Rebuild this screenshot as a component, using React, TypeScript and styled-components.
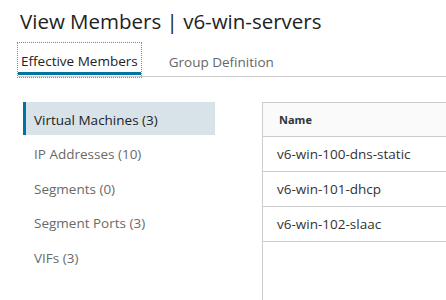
import * as React from "react"
import styled, { createGlobalStyle } from "styled-components"

const GlobalStyle = createGlobalStyle`
  html, body {
    margin: 0;
    padding: 0;
    background: #ffffff;
    font-family: "Open Sans", Lato, sans-serif;
    color: #333333;
  }
`

const Page = styled.div`
  width: 446px;
  height: 300px;
  overflow: hidden;
  display: flex;
  flex-direction: column;
`

const Title = styled.h2`
  margin: 0;
  padding: 8px 0 0 20px;
  height: 34px;
  box-sizing: border-box;
  font-size: 20.5px;
  font-weight: 400;
  line-height: 26px;
  color: #222222;
  white-space: nowrap;
`

const TabBar = styled.div`
  display: flex;
  align-items: flex-end;
  margin-left: 18px;
  margin-top: 8px;
  height: 34px;
  border-bottom: 1px solid #cccccc;
`

const Tab = styled.div<{ $active?: boolean }>`
  display: flex;
  align-items: center;
  height: 34px;
  box-sizing: border-box;
  padding: 3px 3px 0;
  margin-right: 25px;
  margin-bottom: -1px;
  font-size: 13.5px;
  color: ${(p) => (p.$active ? "#222222" : "#666666")};
  outline: ${(p) => (p.$active ? "1px dotted #888888" : "none")};
  box-shadow: ${(p) => (p.$active ? "inset 0 -3px 0 #0072a3" : "none")};
  border-bottom: ${(p) => (p.$active ? "2px solid transparent" : "none")};
`

const Body = styled.div`
  display: flex;
  padding-top: 25px;
  flex: 1;
`

const Nav = styled.div`
  width: 192px;
  margin-left: 23px;
  display: flex;
  flex-direction: column;
`

const NavItem = styled.div<{ $active?: boolean }>`
  height: 33px;
  margin-bottom: 1.5px;
  display: flex;
  align-items: center;
  padding: 2px 0 0 ${(p) => (p.$active ? "8px" : "11px")};
  box-sizing: border-box;
  border-left: ${(p) => (p.$active ? "3px solid #0072a3" : "none")};
  background: ${(p) => (p.$active ? "#d8e3e9" : "transparent")};
  font-size: 13.5px;
  color: ${(p) => (p.$active ? "#222222" : "#6a6a6a")};
  white-space: nowrap;
`

const Grid = styled.div`
  margin-left: 47px;
  flex: 1;
  border-top: 1px solid #cccccc;
  border-left: 1px solid #cccccc;
`

const HeaderRow = styled.div`
  height: 33px;
  display: flex;
  align-items: center;
  padding-left: 16px;
  background: #fafafa;
  border-bottom: 1px solid #cccccc;
  font-size: 11px;
  font-weight: 700;
  color: #333333;
`

const Row = styled.div`
  height: 34px;
  display: flex;
  align-items: center;
  padding-left: 14px;
  border-bottom: 1px solid #cccccc;
  font-size: 13.5px;
  color: #333333;
  white-space: nowrap;
`

const navItems = [
  "Virtual Machines (3)",
  "IP Addresses (10)",
  "Segments (0)",
  "Segment Ports (3)",
  "VIFs (3)",
]

const vms = ["v6-win-100-dns-static", "v6-win-101-dhcp", "v6-win-102-slaac"]

export default function App() {
  return (
    <Page>
      <GlobalStyle />
      <Title>View Members | v6-win-servers</Title>
      <TabBar>
        <Tab $active>Effective Members</Tab>
        <Tab>Group Definition</Tab>
      </TabBar>
      <Body>
        <Nav>
          {navItems.map((item, i) => (
            <NavItem key={item} $active={i === 0}>
              {item}
            </NavItem>
          ))}
        </Nav>
        <Grid>
          <HeaderRow>Name</HeaderRow>
          {vms.map((vm) => (
            <Row key={vm}>{vm}</Row>
          ))}
        </Grid>
      </Body>
    </Page>
  )
}
